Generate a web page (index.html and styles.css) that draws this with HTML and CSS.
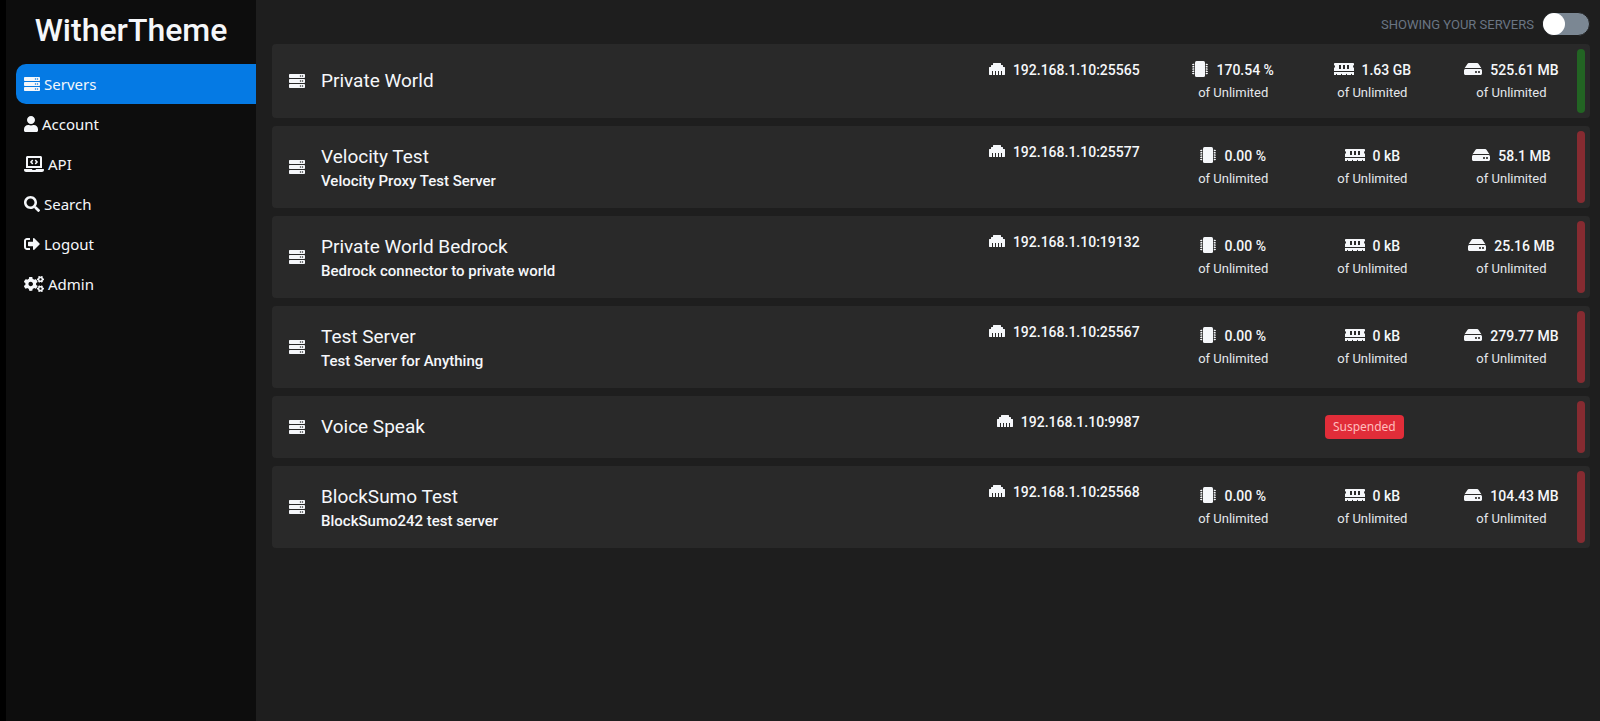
FILE: index.html
```html
<!DOCTYPE html>
<html lang="en">
<head>
<meta charset="utf-8">
<title>WitherTheme</title>
<link rel="stylesheet" href="styles.css">
</head>
<body>
<svg class="sprite" aria-hidden="true">
  <defs>
    <symbol id="server" viewBox="0 0 512 512"><path id="unit" d="M480 160H32c-17.673 0-32-14.327-32-32V64c0-17.673 14.327-32 32-32h448c17.673 0 32 14.327 32 32v64c0 17.673-14.327 32-32 32zm-48-88c-13.255 0-24 10.745-24 24s10.745 24 24 24 24-10.745 24-24-10.745-24-24-24zm-64 0c-13.255 0-24 10.745-24 24s10.745 24 24 24 24-10.745 24-24-10.745-24-24-24z"/><use href="#unit" y="160"/><use href="#unit" y="320"/></symbol>
    <symbol id="user" viewBox="0 0 448 512"><path d="M224 256c70.7 0 128-57.3 128-128S294.700 0 224 0 96 57.300 96 128s57.300 128 128 128zm89.600 32h-16.700c-22.200 10.200-46.900 16-72.900 16s-50.600-5.800-72.900-16h-16.700C60.200 288 0 348.200 0 422.400V464c0 26.500 21.500 48 48 48h352c26.500 0 48-21.500 48-48v-41.600c0-74.200-60.200-134.400-134.400-134.400z"/></symbol>
    <symbol id="laptop" viewBox="0 0 640 512"><path d="M255.030 261.650c6.250 6.250 16.380 6.250 22.630 0l11.310-11.310c6.250-6.250 6.250-16.380 0-22.630L253.250 192l35.710-35.720c6.250-6.250 6.250-16.380 0-22.630l-11.310-11.310c-6.250-6.250-16.380-6.250-22.630 0l-58.340 58.340c-6.250 6.250-6.250 16.380 0 22.630l58.350 58.340zm96.010-11.300l11.310 11.310c6.250 6.250 16.380 6.250 22.630 0l58.340-58.340c6.250-6.250 6.250-16.380 0-22.630l-58.340-58.340c-6.250-6.250-16.380-6.250-22.630 0l-11.310 11.310c-6.250 6.250-6.250 16.380 0 22.630L386.750 192l-35.710 35.720c-6.250 6.250-6.250 16.380 0 22.630zM624 416H381.540c-.74 19.810-14.710 32-32.740 32H288c-18.690 0-33.020-17.470-32.770-32H16c-8.800 0-16 7.200-16 16v16c0 35.200 28.800 64 64 64h512c35.200 0 64-28.800 64-64v-16c0-8.800-7.200-16-16-16zM576 48c0-26.400-21.600-48-48-48H112C85.600 0 64 21.600 64 48v336h512V48zm-64 272H128V64h384v256z"/></symbol>
    <symbol id="search" viewBox="0 0 512 512"><path d="M505 442.700L405.300 343c-4.500-4.500-10.600-7-17-7H372c27.600-35.300 44-79.700 44-128C416 93.100 322.900 0 208 0S0 93.100 0 208s93.100 208 208 208c48.300 0 92.700-16.400 128-44v16.300c0 6.400 2.500 12.500 7 17l99.700 99.700c9.400 9.400 24.600 9.400 33.900 0l28.300-28.300c9.400-9.400 9.400-24.600.1-34zM208 336c-70.700 0-128-57.200-128-128 0-70.700 57.200-128 128-128 70.700 0 128 57.200 128 128 0 70.700-57.200 128-128 128z"/></symbol>
    <symbol id="logout" viewBox="0 0 512 512"><path d="M497 273L329 441c-15 15-41 4.500-41-17v-96H152c-13.300 0-24-10.700-24-24v-96c0-13.300 10.700-24 24-24h136V88c0-21.400 25.900-32 41-17l168 168c9.300 9.400 9.300 24.600 0 34zM192 436v-40c0-6.600-5.400-12-12-12H96c-17.700 0-32-14.300-32-32V160c0-17.700 14.300-32 32-32h84c6.600 0 12-5.400 12-12V76c0-6.600-5.400-12-12-12H96c-53 0-96 43-96 96v192c0 53 43 96 96 96h84c6.600 0 12-5.400 12-12z"/></symbol>
    <symbol id="cogs" viewBox="0 0 640 512"><path id="cog" d="M512.100 191l-8.200 14.300c-3 5.300-9.400 7.500-15.100 5.400-11.800-4.400-22.600-10.700-32.100-18.600-4.600-3.800-5.800-10.500-2.800-15.700l8.200-14.300c-6.900-8-12.300-17.300-15.900-27.400h-16.500c-6 0-11.200-4.300-12.200-10.300-2-12-2.100-24.600 0-37.100 1-6 6.200-10.400 12.200-10.400h16.500c3.600-10.100 9-19.400 15.900-27.400l-8.200-14.300c-3-5.200-1.900-11.900 2.800-15.700 9.500-7.900 20.400-14.200 32.100-18.600 5.700-2.100 12.100.1 15.100 5.400l8.200 14.300c10.500-1.900 21.200-1.900 31.700 0L552 6.300c3-5.300 9.400-7.500 15.100-5.400 11.800 4.400 22.600 10.700 32.100 18.600 4.600 3.800 5.800 10.500 2.800 15.700l-8.200 14.300c6.900 8 12.300 17.300 15.900 27.400h16.500c6 0 11.200 4.300 12.200 10.300 2 12 2.100 24.600 0 37.100-1 6-6.200 10.400-12.200 10.400h-16.500c-3.600 10.100-9 19.400-15.900 27.400l8.200 14.300c3 5.200 1.900 11.900-2.800 15.700-9.500 7.900-20.400 14.200-32.100 18.600-5.700 2.100-12.100-.1-15.100-5.400l-8.200-14.300c-10.400 1.900-21.200 1.900-31.700 0zm-10.500-58.800c38.500 29.600 82.400-14.300 52.800-52.800-38.500-29.700-82.400 14.300-52.800 52.800z"/><use href="#cog" y="301"/><path d="M386.300 286.100l33.700 16.800c10.100 5.800 14.500 18.100 10.500 29.100-8.900 24.200-26.400 46.400-42.600 65.800-7.400 8.900-20.200 11.100-30.300 5.300l-29.100-16.800c-16 13.700-34.600 24.600-54.900 31.700v33.600c0 11.600-8.300 21.600-19.700 23.600-24.600 4.200-50.400 4.400-75.900 0-11.500-2-20-11.900-20-23.600V418c-20.300-7.200-38.900-18-54.900-31.700L74 403c-10 5.800-22.900 3.600-30.300-5.300-16.200-19.400-33.300-41.600-42.200-65.700-4-10.900.4-23.200 10.500-29.100l33.300-16.800c-3.900-20.900-3.900-42.400 0-63.400L12 205.800c-10.100-5.800-14.600-18.100-10.500-29 8.900-24.200 26-46.400 42.200-65.800 7.400-8.900 20.200-11.100 30.300-5.300l29.100 16.800c16-13.700 34.600-24.600 54.900-31.700V57.100c0-11.500 8.200-21.500 19.600-23.500 24.600-4.200 50.500-4.400 76-.1 11.500 2 20 11.900 20 23.600v33.600c20.300 7.200 38.900 18 54.900 31.700l29.100-16.800c10-5.800 22.900-3.600 30.300 5.300 16.200 19.400 33.200 41.600 42.100 65.800 4 10.900.1 23.200-10 29.100l-33.700 16.800c3.900 21 3.900 42.500 0 63.500zm-117.600 21.100c59.200-77-28.700-164.900-105.700-105.700-59.200 77 28.700 164.900 105.700 105.700z"/></symbol>
    <symbol id="ethernet" viewBox="0 0 512 512"><path d="M496 192h-48v-48c0-8.800-7.200-16-16-16h-48V80c0-8.800-7.200-16-16-16H144c-8.800 0-16 7.200-16 16v48H80c-8.800 0-16 7.200-16 16v48H16c-8.800 0-16 7.200-16 16v224c0 8.800 7.200 16 16 16h80V320h32v128h64V320h32v128h64V320h32v128h64V320h32v128h80c8.800 0 16-7.200 16-16V208c0-8.800-7.200-16-16-16z"/></symbol>
    <symbol id="chip" viewBox="0 0 512 512"><rect x="96" width="320" height="512" rx="48"/><path id="pins" d="M72 88v48H30a6 6 0 0 1-6-6v-6H6a6 6 0 0 1-6-6v-12a6 6 0 0 1 6-6h18v-6a6 6 0 0 1 6-6zM440 88v48h42a6 6 0 0 0 6-6v-6h18a6 6 0 0 0 6-6v-12a6 6 0 0 0-6-6h-18v-6a6 6 0 0 0-6-6z"/><use href="#pins" y="72"/><use href="#pins" y="144"/><use href="#pins" y="216"/><use href="#pins" y="288"/></symbol>
    <symbol id="memory" viewBox="0 0 640 512"><path d="M640 130.940V96c0-17.670-14.330-32-32-32H32c-17.670 0-32 14.330-32 32v34.940c18.600 6.610 32 24.190 32 45.060s-13.400 38.450-32 45.060V320h640v-98.940c-18.600-6.610-32-24.190-32-45.060s13.400-38.450 32-45.060zM224 256h-64V128h64v128zm128 0h-64V128h64v128zm128 0h-64V128h64v128zM0 448h64v-26.670c0-8.840 7.160-16 16-16s16 7.160 16 16V448h128v-26.670c0-8.840 7.160-16 16-16s16 7.160 16 16V448h128v-26.670c0-8.840 7.160-16 16-16s16 7.160 16 16V448h128v-26.670c0-8.840 7.160-16 16-16s16 7.160 16 16V448h64v-96H0v96z"/></symbol>
    <symbol id="disk" viewBox="0 0 576 512"><path d="M576 304v96c0 26.510-21.490 48-48 48H48c-26.510 0-48-21.490-48-48v-96c0-26.510 21.490-48 48-48h480c26.510 0 48 21.490 48 48zm-48-80a79.557 79.557 0 0 1 30.777 6.165L462.250 85.374A48.003 48.003 0 0 0 422.311 64H153.689a48 48 0 0 0-39.938 21.374L17.223 230.165A79.557 79.557 0 0 1 48 224h480zm-48 96c-17.673 0-32 14.327-32 32s14.327 32 32 32 32-14.327 32-32-14.327-32-32-32zm-96 0c-17.673 0-32 14.327-32 32s14.327 32 32 32 32-14.327 32-32-14.327-32-32-32z"/></symbol>
  </defs>
</svg>
<div class="app">
  <aside class="sidebar">
    <h1 class="brand">WitherTheme</h1>
    <nav class="nav">
      <a class="nav-link active" href="#"><svg class="icon"><use href="#server"/></svg>Servers</a>
      <a class="nav-link" href="#"><svg class="icon narrow"><use href="#user"/></svg>Account</a>
      <a class="nav-link" href="#"><svg class="icon wide"><use href="#laptop"/></svg>API</a>
      <a class="nav-link" href="#"><svg class="icon"><use href="#search"/></svg>Search</a>
      <a class="nav-link" href="#"><svg class="icon"><use href="#logout"/></svg>Logout</a>
      <a class="nav-link" href="#"><svg class="icon wide"><use href="#cogs"/></svg>Admin</a>
    </nav>
  </aside>
  <main class="content">
    <div class="toolbar">
      <label class="toolbar-label" for="show-all">Showing your servers</label>
      <input class="switch" type="checkbox" role="switch" id="show-all">
    </div>
    <div class="servers">
      <a class="card online" href="#">
        <div class="identity"><svg class="icon"><use href="#server"/></svg><div><p class="name">Private World</p></div></div>
        <div class="address"><svg class="icon"><use href="#ethernet"/></svg><span>192.168.1.10:25565</span></div>
        <div class="stats">
          <div class="stat"><p class="value"><svg class="icon"><use href="#chip"/></svg>170.54 %</p><p class="limit">of Unlimited</p></div>
          <div class="stat"><p class="value"><svg class="icon wide"><use href="#memory"/></svg>1.63 GB</p><p class="limit">of Unlimited</p></div>
          <div class="stat"><p class="value"><svg class="icon medium"><use href="#disk"/></svg>525.61 MB</p><p class="limit">of Unlimited</p></div>
        </div>
      </a>
      <a class="card" href="#">
        <div class="identity"><svg class="icon"><use href="#server"/></svg><div><p class="name">Velocity Test</p><p class="description">Velocity Proxy Test Server</p></div></div>
        <div class="address"><svg class="icon"><use href="#ethernet"/></svg><span>192.168.1.10:25577</span></div>
        <div class="stats">
          <div class="stat"><p class="value"><svg class="icon"><use href="#chip"/></svg>0.00 %</p><p class="limit">of Unlimited</p></div>
          <div class="stat"><p class="value"><svg class="icon wide"><use href="#memory"/></svg>0 kB</p><p class="limit">of Unlimited</p></div>
          <div class="stat"><p class="value"><svg class="icon medium"><use href="#disk"/></svg>58.1 MB</p><p class="limit">of Unlimited</p></div>
        </div>
      </a>
      <a class="card" href="#">
        <div class="identity"><svg class="icon"><use href="#server"/></svg><div><p class="name">Private World Bedrock</p><p class="description">Bedrock connector to private world</p></div></div>
        <div class="address"><svg class="icon"><use href="#ethernet"/></svg><span>192.168.1.10:19132</span></div>
        <div class="stats">
          <div class="stat"><p class="value"><svg class="icon"><use href="#chip"/></svg>0.00 %</p><p class="limit">of Unlimited</p></div>
          <div class="stat"><p class="value"><svg class="icon wide"><use href="#memory"/></svg>0 kB</p><p class="limit">of Unlimited</p></div>
          <div class="stat"><p class="value"><svg class="icon medium"><use href="#disk"/></svg>25.16 MB</p><p class="limit">of Unlimited</p></div>
        </div>
      </a>
      <a class="card" href="#">
        <div class="identity"><svg class="icon"><use href="#server"/></svg><div><p class="name">Test Server</p><p class="description">Test Server for Anything</p></div></div>
        <div class="address"><svg class="icon"><use href="#ethernet"/></svg><span>192.168.1.10:25567</span></div>
        <div class="stats">
          <div class="stat"><p class="value"><svg class="icon"><use href="#chip"/></svg>0.00 %</p><p class="limit">of Unlimited</p></div>
          <div class="stat"><p class="value"><svg class="icon wide"><use href="#memory"/></svg>0 kB</p><p class="limit">of Unlimited</p></div>
          <div class="stat"><p class="value"><svg class="icon medium"><use href="#disk"/></svg>279.77 MB</p><p class="limit">of Unlimited</p></div>
        </div>
      </a>
      <a class="card" href="#">
        <div class="identity"><svg class="icon"><use href="#server"/></svg><div><p class="name">Voice Speak</p></div></div>
        <div class="address"><svg class="icon"><use href="#ethernet"/></svg><span>192.168.1.10:9987</span></div>
        <div class="stats"><span class="badge">Suspended</span></div>
      </a>
      <a class="card" href="#">
        <div class="identity"><svg class="icon"><use href="#server"/></svg><div><p class="name">BlockSumo Test</p><p class="description">BlockSumo242 test server</p></div></div>
        <div class="address"><svg class="icon"><use href="#ethernet"/></svg><span>192.168.1.10:25568</span></div>
        <div class="stats">
          <div class="stat"><p class="value"><svg class="icon"><use href="#chip"/></svg>0.00 %</p><p class="limit">of Unlimited</p></div>
          <div class="stat"><p class="value"><svg class="icon wide"><use href="#memory"/></svg>0 kB</p><p class="limit">of Unlimited</p></div>
          <div class="stat"><p class="value"><svg class="icon medium"><use href="#disk"/></svg>104.43 MB</p><p class="limit">of Unlimited</p></div>
        </div>
      </a>
    </div>
  </main>
</div>
</body>
</html>
```
FILE: styles.css
```css
* { box-sizing: border-box; }

body {
  margin: 0;
  background: #1e1e1e;
  color: #f5f7fa;
  font-family: Roboto, "Liberation Sans", sans-serif;
}

h1, p { margin: 0; }
a { color: inherit; text-decoration: none; }

.sprite { position: absolute; width: 0; height: 0; }

.icon {
  flex: none;
  width: 16px;
  height: 16px;
  fill: currentColor;
}
.icon.narrow { width: 14px; }
.icon.medium { width: 18px; }
.icon.wide { width: 20px; }

.app { display: flex; min-height: 100vh; }

/* Sidebar */
.sidebar {
  flex: none;
  width: 256px;
  border-left: 6px solid #000;
  background: #0d0d0d;
}
.brand {
  padding: 10px 0 14px;
  font-size: 32px;
  font-weight: 500;
  line-height: 40px;
  text-align: center;
}
.nav { padding-left: 10px; }
.nav-link {
  display: flex;
  align-items: center;
  gap: 4px;
  height: 40px;
  padding: 0 8px;
  border-radius: 10px 0 0 10px;
  font-family: "Noto Sans", "Open Sans", sans-serif;
  font-size: 15px;
}
.nav-link.active { background: #057ae4; }

/* Main column */
.content { flex: 1; min-width: 0; padding: 12px 10px 16px 16px; }
.toolbar {
  display: flex;
  align-items: center;
  justify-content: flex-end;
  gap: 8px;
  margin-bottom: 8px;
}
.toolbar-label {
  color: #6a7583;
  font-size: 13px;
  text-transform: uppercase;
}
.switch {
  appearance: none;
  display: flex;
  width: 48px;
  height: 24px;
  margin: 0;
  border: 1px solid #1e1e1e;
  border-radius: 12px;
  background: #7b8793;
}
.switch::before {
  content: "";
  width: 22px;
  height: 22px;
  border-radius: 50%;
  background: #fff;
}
.switch:checked { justify-content: flex-end; }

/* Server list */
.servers { display: grid; gap: 8px; }
.card {
  position: relative;
  display: grid;
  grid-template-columns: repeat(12, minmax(0, 1fr));
  gap: 16px;
  padding: 17px;
  border-radius: 4px;
  background: #292929;
}
.card::after {
  content: "";
  position: absolute;
  top: 5px;
  right: 5px;
  bottom: 5px;
  width: 8px;
  border-radius: 4px;
  background: #862b31;
}
.card.online::after { background: #226423; }

.identity {
  grid-column: span 6;
  display: flex;
  align-items: center;
  gap: 16px;
}
.name { font-size: 19px; line-height: 28px; }
.description { font-size: 15px; font-weight: 500; line-height: 20px; }

.address {
  grid-column: span 2;
  display: flex;
  align-items: flex-start;
  justify-content: flex-end;
  gap: 8px;
  font-size: 14px;
  font-weight: 500;
  line-height: 18px;
}
.stats {
  grid-column: span 4;
  display: flex;
  align-items: center;
  justify-content: center;
}
.stat { flex: 1; margin-left: 16px; text-align: center; }
.value {
  display: flex;
  align-items: center;
  justify-content: center;
  gap: 8px;
  font-size: 14px;
  font-weight: 500;
  line-height: 18px;
}
.value .icon { margin-bottom: 2px; }
.limit { padding-top: 6px; font-size: 13px; line-height: 16px; color: #e4e7eb; }

.badge {
  padding: 4px 8px;
  border-radius: 4px;
  background: #e12d39;
  color: #ffbdbd;
  font-family: "Noto Sans", "Open Sans", sans-serif;
  font-size: 12px;
  line-height: 16px;
}
```
